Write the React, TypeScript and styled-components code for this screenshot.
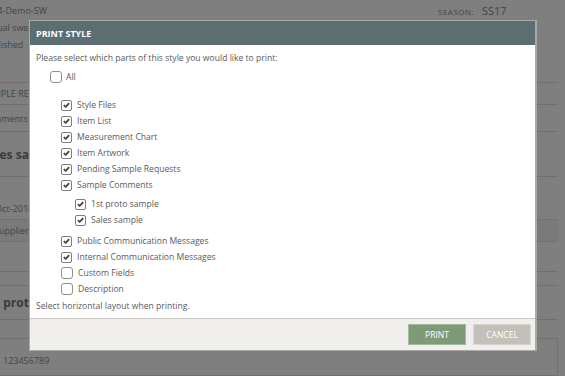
import React from "react";
import styled, { createGlobalStyle } from "styled-components";

const GlobalStyle = createGlobalStyle`
  html, body {
    margin: 0;
    padding: 0;
    width: 565px;
    height: 376px;
    overflow: hidden;
    background: #fff;
    font-family: "Open Sans", "Liberation Sans", sans-serif;
  }
`;

interface Option {
  label: string;
  checked: boolean;
  children?: Option[];
}

const options: Option[] = [
  { label: "Style Files", checked: true },
  { label: "Item List", checked: true },
  { label: "Measurement Chart", checked: true },
  { label: "Item Artwork", checked: true },
  { label: "Pending Sample Requests", checked: true },
  {
    label: "Sample Comments",
    checked: true,
    children: [
      { label: "1st proto sample", checked: true },
      { label: "Sales sample", checked: true },
    ],
  },
  { label: "Public Communication Messages", checked: true },
  { label: "Internal Communication Messages", checked: true },
  { label: "Custom Fields", checked: false },
  { label: "Description", checked: false },
];

const Check = ({ checked }: { checked: boolean }) => (
  <Box checked={checked}>
    {checked && (
      <svg width="7" height="6" viewBox="0 0 7 6">
        <path
          d="M0.8 3.1 L2.7 4.9 L6.2 1.1"
          fill="none"
          stroke="#3d3d3d"
          strokeWidth="1.6"
        />
      </svg>
    )}
  </Box>
);

export default function App() {
  return (
    <>
      <GlobalStyle />
      <Page>
        <TopRow>
          <Cut>1234-Demo-SW</Cut>
          <Season>
            <small>SEASON:</small> SS17
          </Season>
        </TopRow>
        <Details>
          <Cut>Casual sweater</Cut>
          <Cut>Published</Cut>
          <Cut>Yes</Cut>
        </Details>
        <Row height={13} />
        <Row height={23}>
          <Cut>SAMPLE REQUESTS</Cut>
        </Row>
        <Row height={28}>
          <Cut>Comments</Cut>
        </Row>
        <Heading height={47}>
          <Cut>Sales sample</Cut>
        </Heading>
        <DateRow>
          <Cut>12-Oct-2016</Cut>
        </DateRow>
        <Shaded>
          <Cut>To supplier</Cut>
        </Shaded>
        <Row height={31} />
        <Row height={14} />
        <Heading height={36}>
          <Cut>1st proto sample</Cut>
        </Heading>
        <InputBox>123456789</InputBox>
      </Page>
      <Overlay />
      <Modal>
        <Header>PRINT STYLE</Header>
        <Body>
          <Intro>Please select which parts of this style you would like to print:</Intro>
          <AllRow>
            <Check checked={false} />
            <span>All</span>
          </AllRow>
          <List>
            {options.map((o) => (
              <React.Fragment key={o.label}>
                <Item>
                  <Check checked={o.checked} />
                  <span>{o.label}</span>
                </Item>
                {o.children && (
                  <SubList>
                    {o.children.map((c) => (
                      <Item key={c.label}>
                        <Check checked={c.checked} />
                        <span>{c.label}</span>
                      </Item>
                    ))}
                  </SubList>
                )}
              </React.Fragment>
            ))}
          </List>
          <Note>Select horizontal layout when printing.</Note>
        </Body>
        <Footer>
          <Button variant="primary">PRINT</Button>
          <Button variant="muted">CANCEL</Button>
        </Footer>
      </Modal>
    </>
  );
}

const Page = styled.div`
  width: 568px;
  height: 376px;
  display: flex;
  flex-direction: column;
  font-size: 9px;
  color: #8a8a8a;
  margin-left: -10px;
  overflow: hidden;
`;

const TopRow = styled.div`
  height: 20px;
  display: grid;
  grid-template-columns: 448px auto;
  align-items: center;
  padding-top: 3px;
  box-sizing: border-box;
`;

const Cut = styled.span`
  display: block;
  margin-left: -8px;
  white-space: nowrap;
`;

const Season = styled.span`
  font-size: 11px;
  small {
    font-size: 8px;
    letter-spacing: 0.5px;
    margin-right: 5px;
  }
`;

const Details = styled.div`
  height: 51px;
  display: grid;
  grid-auto-rows: 17px;
  align-items: center;
`;

const Row = styled.div<{ height: number }>`
  height: ${(p) => p.height}px;
  display: flex;
  align-items: center;
  border-bottom: 1px solid #dedede;
`;

const Heading = styled(Row)`
  font-size: 12px;
  font-weight: 700;
  color: #777;
`;

const DateRow = styled.div`
  height: 45px;
  display: flex;
  align-items: flex-end;
  padding-bottom: 4px;
  box-sizing: border-box;
`;

const Shaded = styled.div`
  height: 24px;
  display: flex;
  align-items: center;
  background: #f4f4f4;
  border-top: 1px solid #e4e4e4;
  border-bottom: 1px solid #e4e4e4;
  box-sizing: border-box;
`;

const InputBox = styled.div`
  margin-top: 18px;
  height: 32px;
  padding-left: 12px;
  border: 1px solid #e0e0e0;
  display: flex;
  align-items: center;
  padding-top: 6px;
`;

const Overlay = styled.div`
  position: fixed;
  inset: 0;
  background: rgba(0, 0, 0, 0.5);
`;

const Modal = styled.div`
  position: fixed;
  left: 29px;
  top: 20px;
  width: 505px;
  height: 329px;
  display: flex;
  flex-direction: column;
  background: #fff;
  border: 1px solid #a9a9a5;
  border-right-width: 2px;
`;

const Header = styled.div`
  height: 24px;
  display: flex;
  align-items: center;
  padding-left: 6px;
  background: #5b6e72;
  color: #fff;
  font-size: 9px;
  font-weight: 700;
`;

const Body = styled.div`
  flex: 1;
  display: flex;
  flex-direction: column;
  padding: 7px 6px 0;
  font-size: 8.6px;
  color: #5a5a5a;
`;

const Intro = styled.div`
  line-height: 12px;
`;

const AllRow = styled.label`
  height: 16px;
  margin: 5px 0 0 14px;
  display: flex;
  align-items: center;
  gap: 4px;
`;

const List = styled.div`
  margin: 12px 0 0 25px;
  display: flex;
  flex-direction: column;
`;

const SubList = styled.div`
  margin: 3px 0 5px 14px;
  display: flex;
  flex-direction: column;
`;

const Item = styled.label`
  height: 16px;
  display: flex;
  align-items: center;
  gap: 5px;
`;

const Box = styled.span<{ checked: boolean }>`
  box-sizing: border-box;
  width: ${(p) => (p.checked ? "11px" : "12px")};
  height: ${(p) => (p.checked ? "11px" : "12px")};
  border: 1px solid ${(p) => (p.checked ? "#7d7d7d" : "#8f8f8f")};
  border-radius: ${(p) => (p.checked ? "2px" : "3px")};
  background: #fff;
  display: flex;
  align-items: center;
  justify-content: center;
  flex-shrink: 0;
`;

const Note = styled.div`
  margin-top: 3px;
  line-height: 12px;
`;

const Footer = styled.div`
  height: 31px;
  border-top: 1px solid #c9c6c1;
  background: #f0efed;
  display: flex;
  align-items: center;
  justify-content: flex-end;
  gap: 7px;
  padding-right: 4px;
`;

const Button = styled.button<{ variant: "primary" | "muted" }>`
  width: 58px;
  height: 21px;
  border: 1px solid ${(p) => (p.variant === "primary" ? "#a2b99d" : "#d8d4cf")};
  background: ${(p) => (p.variant === "primary" ? "#7e9b78" : "#c3bfb9")};
  color: #fff;
  font-family: "Open Sans", "Liberation Sans", sans-serif;
  font-size: 8.5px;
  padding: 0;
`;
